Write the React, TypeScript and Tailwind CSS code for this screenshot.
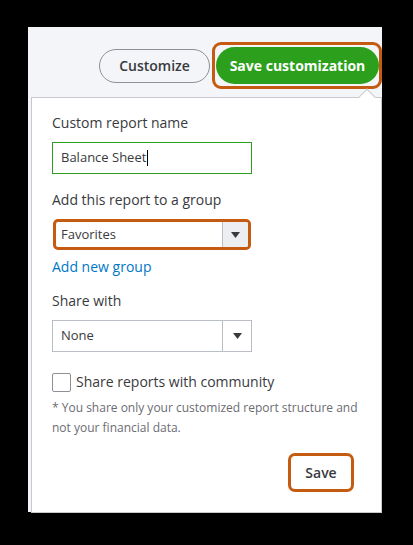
import type { ReactNode } from 'react';

const font = { fontFamily: '"Open Sans", "Liberation Sans", sans-serif' };

function Caret() {
  return (
    <svg width="9" height="6" viewBox="0 0 9 6" className="block">
      <path d="M0 0h9L4.5 6z" fill="#393a3d" />
    </svg>
  );
}

function Label({ children, className = '' }: { children: ReactNode; className?: string }) {
  return <div className={`text-[14px] leading-5 text-[#393a3d] ${className}`}>{children}</div>;
}

export default function App() {
  return (
    <div className="h-[545px] w-[413px] overflow-hidden bg-black" style={font}>
      <div className="ml-[28px] mt-[27px] h-[485px] w-[354px] bg-[#f4f5f8]">
        {/* toolbar */}
        <div className="flex items-center justify-end pt-[15px]">
          <button className="mr-[2px] h-[34px] w-[111px] rounded-full border border-[#8d9096] bg-[#f4f5f8] text-[14px] font-semibold text-[#393a3d]">
            Customize
          </button>
          <div className="rounded-[9px] border-[3px] border-[#c55a11] py-[2px] pl-[1px] pr-0">
            <button className="h-[37px] w-[163px] rounded-full bg-[#2ca01c] text-[14px] font-bold text-white">
              Save customization
            </button>
          </div>
        </div>

        {/* popover */}
        <div className="relative ml-[3px] mt-[8px] h-[416px] w-[351px] border border-[#c8c9cc] bg-white px-[20px] pt-[15px]">
          <div className="absolute -top-[7px] right-[8px] h-[12px] w-[12px] rotate-45 border-l border-t border-[#c8c9cc] bg-white" />

          <Label>Custom report name</Label>
          <div className="mt-[9px] flex h-[32px] w-[200px] items-center border border-[#2ca01c] px-[8px] text-[13px] text-[#393a3d]">
            Balance Sheet<span className="ml-px h-[16px] w-px bg-black" />
          </div>

          <Label className="mt-[16px]">Add this report to a group</Label>
          <div className="ml-px mt-[9px] flex h-[31px] w-[198px] rounded-[5px] border-[3px] border-[#c55a11] bg-white">
            <div className="flex flex-1 items-center pl-[5px] text-[13px] text-[#393a3d]">Favorites</div>
            <div className="flex w-[26px] items-center justify-center rounded-r-[2px] border-l border-[#babec5] bg-[#eceef1]">
              <Caret />
            </div>
          </div>

          <div className="mt-[7px] text-[14px] leading-5 text-[#0077c5]">Add new group</div>

          <Label className="mt-[14px]">Share with</Label>
          <div className="mt-[9px] flex h-[32px] w-[200px] border border-[#babec5] bg-white">
            <div className="flex flex-1 items-center pl-[8px] text-[13px] text-[#393a3d]">None</div>
            <div className="flex w-[29px] items-center justify-center border-l border-[#babec5]">
              <Caret />
            </div>
          </div>

          <div className="mt-[20px] flex items-center">
            <span className="h-[19px] w-[19px] rounded-[2px] border border-[#8d9096] bg-white" />
            <span className="ml-[5px] text-[14px] leading-5 text-[#393a3d]">Share reports with community</span>
          </div>
          <div className="mt-[6px] text-[12px] leading-5 text-[#6b6c72]">
            * You share only your customized report structure and not your financial data.
          </div>

          <div className="mt-[15px] flex justify-end pr-[7px]">
            <button className="h-[39px] w-[66px] rounded-[7px] border-[3px] border-[#c55a11] bg-white text-[14px] font-semibold text-[#393a3d]">
              Save
            </button>
          </div>
        </div>
      </div>
    </div>
  );
}
